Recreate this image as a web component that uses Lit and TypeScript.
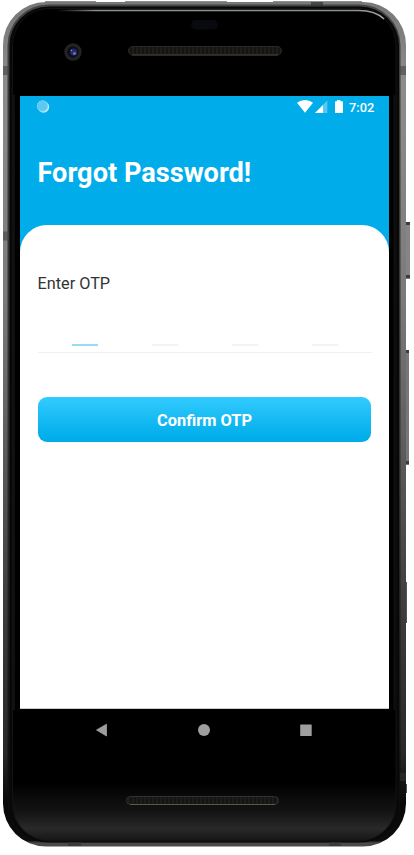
import { LitElement, html, svg, css } from "lit";
import { customElement, property } from "lit/decorators.js";

@customElement("device-frame")
class DeviceFrame extends LitElement {
  static styles = css`
    :host { display: block; width: 414px; height: 855px; }
    svg { display: block; }
  `;
  render() {
    const keys = [
      { x: 405, y: 222, w: 5, h: 57, c: "#858585" },
      { x: 405, y: 350, w: 4, h: 115, c: "#777" },
    ];
    return html`<svg width="414" height="855" viewBox="0 0 414 855">
      <defs>
        <linearGradient id="metal" gradientUnits="userSpaceOnUse" x1="0" y1="0" x2="0" y2="855">
          <stop offset="0" stop-color="#777"/><stop offset=".1" stop-color="#8c8c8c"/>
          <stop offset=".35" stop-color="#7a7a7a"/><stop offset=".55" stop-color="#585858"/>
          <stop offset=".7" stop-color="#3e3e3e"/><stop offset=".88" stop-color="#282828"/>
          <stop offset=".94" stop-color="#080808"/><stop offset=".983" stop-color="#0c0c0c"/>
          <stop offset=".986" stop-color="#4a4a4a"/>
        </linearGradient>
        <linearGradient id="bezel" gradientUnits="userSpaceOnUse" x1="0" y1="0" x2="0" y2="855">
          <stop offset="0" stop-color="#444"/><stop offset=".1" stop-color="#3c3c3c"/>
          <stop offset=".5" stop-color="#303030"/><stop offset=".85" stop-color="#161616"/>
          <stop offset="1" stop-color="#050505"/>
        </linearGradient>
        <linearGradient id="glow" x1="0" y1="0" x2="0" y2="1">
          <stop offset="0" stop-color="#000"/><stop offset=".93" stop-color="#000"/>
          <stop offset=".965" stop-color="#141414"/><stop offset=".985" stop-color="#292929"/>
          <stop offset="1" stop-color="#161616"/>
        </linearGradient>
        <linearGradient id="shine">
          <stop offset="0" stop-color="#8a9490" stop-opacity="0"/><stop offset=".12" stop-color="#8a9490"/>
          <stop offset=".9" stop-color="#8a9490"/><stop offset="1" stop-color="#aaa"/>
        </linearGradient>
        <pattern id="mesh" width="4" height="9" patternUnits="userSpaceOnUse">
          <rect width="4" height="9" fill="#151412"/><rect width="2" height="9" fill="#1f1d19"/>
        </pattern>
      </defs>
      ${keys.map(k => svg`<rect x=${k.x} y=${k.y} width=${k.w} height=${k.h} fill=${k.c}/>
        <rect x=${k.x} y=${k.y} width=${k.w} height="3" fill="#3c3c3c"/>
        <rect x=${k.x} y=${k.y + k.h - 4} width=${k.w} height="3" fill="#3c3c3c"/>`)}
      <rect x="405" y="582" width="2" height="41" fill="#555"/>
      <rect x="405" y="784" width="2" height="9" fill="#555"/>
      <rect x="3" y="2" width="403" height="844.5" rx="43" fill="url(#metal)"/>
      <path d="M45 1.5H96M125 1.5H227M273 1.5H362" stroke="#8f8f8b" stroke-width="1"/>
      <rect x="7.5" y="4.5" width="393" height="837.5" rx="41" fill="url(#bezel)"/>
      <rect x="9.5" y="6.5" width="389.5" height="836" rx="39" fill="#080808"/>
      <rect x="12.5" y="8.5" width="383.5" height="832.5" rx="37" fill="url(#glow)" stroke="#121212"/>
      <path d="M14 95V710M394.500 95V710" stroke="#101010" stroke-width="2"/>
      <path d="M57 10.500H359Q375 10.500 384 19" fill="none" stroke="url(#shine)" stroke-width="1.500"/>
      <path d="M3 70.500H9M400 70.500H406M3 236H9" stroke="#444" stroke-width="9" stroke-opacity=".6"/>
      <path d="M311 4H323M68 844H81M329 844H341" stroke="#333" stroke-width="4" stroke-opacity=".7"/>
      <path d="M400 777H406" stroke="#484848" stroke-width="8" stroke-opacity=".3"/>
      <rect x="191" y="20" width="27" height="9.500" rx="4.700" fill="#090a0f"/>
      <rect x="128.500" y="46.500" width="153" height="8.500" rx="4.250" fill="url(#mesh)" stroke="#2a2926"/>
      <rect x="126.500" y="796.500" width="152" height="8" rx="4" fill="url(#mesh)" stroke="#33312f"/>
      <path d="M132 55H278" stroke="#42403b" stroke-width="1"/>
      <path d="M130 804.500H275" stroke="#595753" stroke-width="1"/>
      <circle cx="73" cy="52" r="8.700" fill="#242222"/>
      <circle cx="73" cy="52" r="5.700" fill="#0c0d17"/>
      <circle cx="73.500" cy="52" r="3.500" fill="#242b66"/>
      <circle cx="74.500" cy="53.500" r="1.600" fill="#5f6bd0"/>
      <circle cx="71.500" cy="50.500" r=".7" fill="#8c98e8"/>
    </svg>`;
  }
}

@customElement("status-bar")
class StatusBar extends LitElement {
  @property() time = "";
  static styles = css`
    :host { display: flex; align-items: center; height: 21px; padding: 0 14px 0 16px; color: #fff; }
    svg { display: block; }
    .icons { margin-left: auto; }
    .time { width: 26px; margin-left: 5px; font: 500 12.800px/21px Roboto, sans-serif; white-space: nowrap; padding-top: 1px; }
  `;
  render() {
    return html`
      <svg width="15" height="21" viewBox="0 0 15 21">
        <circle cx="7.500" cy="11" r="5.700" fill="#fff" fill-opacity=".75"/>
        <circle cx="6.500" cy="10" r="5.500" fill="#5cc9f2"/>
        <circle cx="6.500" cy="10" r="5.200" fill="none" stroke="#a7e1f7" stroke-dasharray="1.500 1" stroke-width=".8"/>
      </svg>
      <svg class="icons" width="48" height="21" viewBox="0 0 48 21">
        <path d="M1 6.800Q4.500 4 9 4T17 6.800L9 16.800Z" fill="#fff"/>
        <path d="M31.300 4.500V17H19Z" fill="#fff" fill-opacity=".35"/>
        <path d="M27 9V17H19Z" fill="#fff"/>
        <path d="M41 4H44.500V5.300H46.200Q47 5.300 47 6.100V16.200Q47 17 46.200 17H39.800Q39 17 39 16.200V6.100Q39 5.300 39.800 5.300H41Z" fill="#fff"/>
      </svg>
      <span class="time">${this.time}</span>`;
  }
}

@customElement("otp-input")
class OtpInput extends LitElement {
  @property({ type: Number }) length = 4;
  @property({ type: Number }) active = 0;
  static styles = css`
    :host { display: flex; justify-content: space-between; align-items: flex-end; box-sizing: border-box; height: 54px; padding: 0 34.500px 6px 34px; border-bottom: 1px solid #f0f0f0; }
    .slot { width: 25.500px; height: 2px; background: #f3f3f3; }
    .slot.on { background: #99dcf7; }
  `;
  render() {
    return Array.from({ length: this.length }, (_, i) =>
      html`<div class=${i === this.active ? "slot on" : "slot"}></div>`);
  }
}

@customElement("app-root")
class AppRoot extends LitElement {
  static styles = css`
    :host { display: block; position: relative; box-sizing: border-box; width: 414px; height: 855px; padding: 96px 25px 0 20px; background: #fff; font-family: Roboto, sans-serif; overflow: hidden; }
    device-frame { position: absolute; left: 0; top: 0; }
    .phone { position: relative; width: 369px; }
    .screen { display: flex; flex-direction: column; height: 613px; background: #00adea; }
    h1 { margin: 0; padding: 36px 17.500px 0; height: 72px; font-size: 27.150px; line-height: 40px; font-weight: 700; color: #fff; white-space: nowrap; }
    .sheet { flex: 1; box-sizing: border-box; padding: 47px 18px 0; background: #fff; border-radius: 27px 27px 0 0; border-bottom: 1px solid #ccc; }
    label { display: block; font-size: 16.250px; line-height: 24px; color: #333; margin: 0 0 3px -.5px; }
    otp-input { width: 334px; }
    button { display: block; width: 333px; height: 45px; margin: 44px 0 0; padding: 2px 0 0; border: 0; border-radius: 9px; background: linear-gradient(#32cbff, #00ade9 92%); color: #fff; font: 700 16.400px/20px Roboto, sans-serif; }
    nav { display: flex; justify-content: space-between; align-items: center; height: 42px; padding: 0 76px 0 75px; }
    nav svg { display: block; }
  `;
  render() {
    return html`
      <device-frame></device-frame>
      <div class="phone">
        <div class="screen">
          <status-bar time="7:02"></status-bar>
          <h1>Forgot Password!</h1>
          <main class="sheet">
            <label>Enter OTP</label>
            <otp-input length="4" active="0"></otp-input>
            <button>Confirm OTP</button>
          </main>
        </div>
        <nav>
          <svg width="14" height="14" viewBox="0 0 14 14"><path d="M1.500 7L11.500 1.200V13Z" fill="#9e9e9e" stroke="#9e9e9e" stroke-width=".8" stroke-linejoin="round"/></svg>
          <svg width="14" height="14" viewBox="0 0 14 14"><circle cx="7" cy="7" r="6" fill="#9e9e9e"/></svg>
          <svg width="14" height="14" viewBox="0 0 14 14"><rect x="1.200" y="1.500" width="11.500" height="11.500" rx=".5" fill="#9e9e9e"/></svg>
        </nav>
      </div>`;
  }
}
